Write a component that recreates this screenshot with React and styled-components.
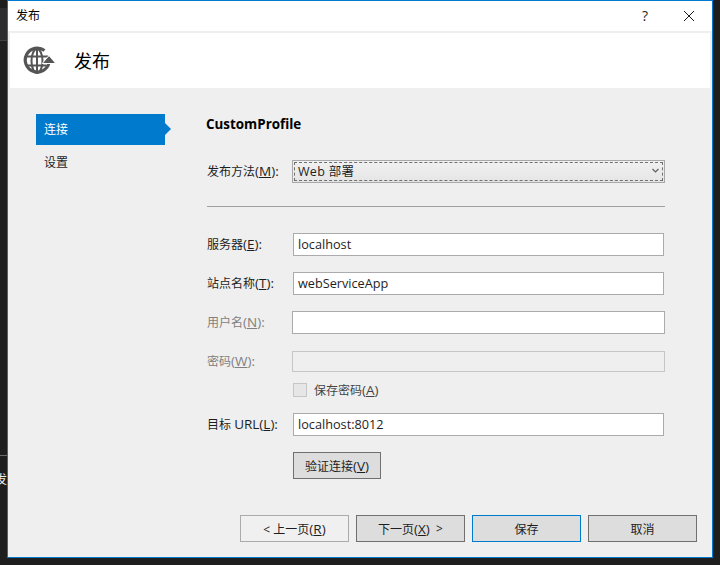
import React from "react";
import styled, { createGlobalStyle } from "styled-components";

const Global = createGlobalStyle`
  html, body { margin: 0; padding: 0; background: #1e1e1e; }
  body { width: 720px; height: 565px; overflow: hidden; position: relative; }
`;

const FONT = `"Open Sans", "Noto Sans CJK SC", sans-serif`;

const Desktop = styled.div`
  position: relative;
  width: 720px;
  height: 565px;
  overflow: hidden;
  background: #1e1e1e;
  font-family: ${FONT};
  font-size: 12px;
  color: #1e1e1e;
`;
const BackStrip = styled.div`
  position: absolute;
  left: 0;
  top: 8px;
  width: 7px;
  height: 32px;
  background: #2d2d30;
  border-bottom: 1px solid #3f3f46;
`;
const BackLine = styled.div`
  position: absolute;
  left: 0;
  top: 455px;
  width: 7px;
  height: 1px;
  background: #6a6a6a;
`;
const BackText = styled.div`
  position: absolute;
  left: -5px;
  top: 471px;
  color: #f1f1f1;
  font-size: 12px;
  line-height: 18px;
`;
const Window = styled.div`
  position: absolute;
  left: 7px;
  top: 0;
  width: 706px;
  height: 558px;
  box-sizing: border-box;
  border: 1px solid #007acc;
  background: #efefef;
  display: flex;
  flex-direction: column;
`;
const TitleBar = styled.div`
  height: 30px;
  flex: none;
  background: #fff;
  display: flex;
  align-items: center;
  padding: 0 10px 0 8px;
  line-height: 30px;
`;
const TitleText = styled.div`
  flex: 1;
  color: #000;
`;
const Help = styled.div`
  width: 14px;
  margin-right: 31px;
  font-size: 14px;
  color: #1e1e1e;
  text-align: center;
`;
const CloseIcon = styled.svg`
  display: block;
  width: 12px;
  height: 12px;
  margin-right: 7px;
`;
const Header = styled.div`
  margin: 2px 2px 0;
  height: 55px;
  flex: none;
  background: #fff;
  display: flex;
  align-items: center;
  padding-left: 13px;
`;
const HeaderIcon = styled.svg`
  display: block;
  width: 34px;
  height: 32px;
  flex: none;
`;
const HeaderTitle = styled.div`
  margin-left: 17px;
  padding-bottom: 2px;
  font-size: 18px;
  color: #000;
`;
const Body = styled.div`
  flex: 1;
  display: flex;
  min-height: 0;
`;
const Sidebar = styled.div`
  width: 170px;
  flex: none;
  box-sizing: border-box;
  padding: 26px 0 0 28px;
`;
const NavItem = styled.div`
  position: relative;
  width: 129px;
  height: 31px;
  box-sizing: border-box;
  padding-left: 8px;
  line-height: 31px;
  margin-bottom: 2px;
  background: ${p => (p.$active ? "#007acc" : "transparent")};
  color: ${p => (p.$active ? "#fff" : "#1e1e1e")};
  ${p =>
    p.$active &&
    `&::after {
      content: "";
      position: absolute;
      left: 100%;
      top: 9px;
      border-left: 6px solid #007acc;
      border-top: 6px solid transparent;
      border-bottom: 6px solid transparent;
    }`}
`;
const Content = styled.div`
  flex: 1;
  padding: 26px 0 0 29px;
  display: flex;
  flex-direction: column;
`;
const Heading = styled.div`
  height: 20px;
  margin-left: -1px;
  line-height: 20px;
  font-size: 13.4px;
  font-weight: 700;
  color: #000;
`;
const Row = styled.div`
  display: flex;
  align-items: center;
  margin-top: ${p => p.$top}px;
  height: ${p => p.$h || 23}px;
`;
const Label = styled.div`
  width: 86px;
  flex: none;
  padding-bottom: 2px;
  white-space: nowrap;
  color: ${p => (p.$off ? "#808080" : "#1e1e1e")};
`;
const Key = styled.span`
  font-size: 13.5px;
`;
const Input = styled.div`
  box-sizing: border-box;
  width: ${p => (p.$wide ? 373 : 371)}px;
  height: ${p => p.$h || 23}px;
  margin-left: ${p => (p.$wide ? -1 : 0)}px;
  padding-left: 4px;
  line-height: 20px;
  font-size: 12.7px;
  background: ${p => (p.$disabled ? "#efefef" : "#fff")};
  border: 1px solid ${p => (p.$disabled ? "#c6c6c6" : "#ababab")};
  color: #1e1e1e;
`;
const Select = styled.div`
  box-sizing: border-box;
  width: 373px;
  height: 23px;
  margin-left: -1px;
  padding: 1px;
  border: 1px solid #a8a8a8;
  background: linear-gradient(#f1f1f1, #e5e5e5);
`;
const SelectInner = styled.div`
  box-sizing: border-box;
  height: 19px;
  border: 1px dashed #707070;
  display: flex;
  align-items: center;
  justify-content: space-between;
  padding: 0 3px 2px 3px;
  font-size: 12.5px;
  letter-spacing: 0.3px;
  color: #1e1e1e;
`;
const Chevron = styled.svg`
  display: block;
  width: 7px;
  height: 5px;
`;
const Divider = styled.div`
  margin-top: 23px;
  width: 458px;
  height: 1px;
  background: #a0a0a0;
`;
const CheckRow = styled.div`
  display: flex;
  align-items: center;
  margin: 11px 0 0 86px;
  height: 13px;
`;
const CheckBox = styled.div`
  box-sizing: border-box;
  width: 14px;
  height: 14px;
  border: 1px solid #c6c6c6;
  background: #e6e6e6;
`;
const CheckLabel = styled.div`
  margin-left: 7px;
  color: #444;
`;
const Button = styled.div`
  box-sizing: border-box;
  width: ${p => p.$w || 109}px;
  height: 27px;
  display: flex;
  align-items: center;
  justify-content: center;
  white-space: pre;
  background: ${p => (p.$light ? "#f0f0f0" : "#dddddd")};
  border: 1px solid ${p => (p.$primary ? "#007acc" : p.$light ? "#ababab" : "#707070")};
  color: #1e1e1e;
`;
const VerifyWrap = styled.div`
  margin: 16px 0 0 86px;
`;
const Footer = styled.div`
  flex: none;
  display: flex;
  justify-content: flex-end;
  gap: 7px;
  padding: 0 15px 15px 0;
`;

const Globe = () => (
  <HeaderIcon viewBox="0 0 34 32">
    <g fill="none" stroke="#555">
      <path d="M21.5 5.5A12 12 0 1 0 26 17.5" strokeWidth="3.2" />
      <ellipse cx="14" cy="16" rx="5.5" ry="12" strokeWidth="2" />
      <path d="M14 4v24M3 11.5h22M3 20.5h20" strokeWidth="2" />
    </g>
    <path d="M26 10.5l-6.8 8h13.6z" fill="#555" stroke="#fff" strokeWidth="1" strokeLinejoin="round" />
  </HeaderIcon>
);

export default function App() {
  return (
    <Desktop>
      <Global />
      <BackStrip />
      <BackLine />
      <BackText>发</BackText>
      <Window>
        <TitleBar>
          <TitleText>发布</TitleText>
          <Help>?</Help>
          <CloseIcon viewBox="0 0 12 12">
            <path d="M1 1l10 10M11 1L1 11" stroke="#1a1a1a" strokeWidth="1" fill="none" />
          </CloseIcon>
        </TitleBar>
        <Header>
          <Globe />
          <HeaderTitle>发布</HeaderTitle>
        </Header>
        <Body>
          <Sidebar>
            <NavItem $active>连接</NavItem>
            <NavItem>设置</NavItem>
          </Sidebar>
          <Content>
            <Heading>CustomProfile</Heading>
            <Row $top={26}>
              <Label>发布方法<Key>(<u>M</u>):</Key></Label>
              <Select>
                <SelectInner>
                  <span>Web 部署</span>
                  <Chevron viewBox="0 0 7 5">
                    <path d="M.5 1l3 3 3-3" stroke="#606060" strokeWidth="1.2" fill="none" />
                  </Chevron>
                </SelectInner>
              </Select>
            </Row>
            <Divider />
            <Row $top={26}>
              <Label>服务器<Key>(<u>E</u>):</Key></Label>
              <Input>localhost</Input>
            </Row>
            <Row $top={16}>
              <Label>站点名称<Key>(<u>T</u>):</Key></Label>
              <Input>webServiceApp</Input>
            </Row>
            <Row $top={16}>
              <Label $off>用户名<Key>(<u>N</u>):</Key></Label>
              <Input $wide />
            </Row>
            <Row $top={17} $h={21}>
              <Label $off>密码<Key>(<u>W</u>):</Key></Label>
              <Input $wide $disabled $h={21} />
            </Row>
            <CheckRow>
              <CheckBox />
              <CheckLabel>保存密码<Key>(<u>A</u>)</Key></CheckLabel>
            </CheckRow>
            <Row $top={17}>
              <Label>目标 <Key>URL(<u>L</u>):</Key></Label>
              <Input>localhost:8012</Input>
            </Row>
            <VerifyWrap>
              <Button $w={88}>验证连接<Key>(<u>V</u>)</Key></Button>
            </VerifyWrap>
          </Content>
        </Body>
        <Footer>
          <Button $light>{"< 上一页"}<Key>(<u>R</u>)</Key></Button>
          <Button>下一页<Key>(<u>X</u>)</Key>{"  >"}</Button>
          <Button $primary>保存</Button>
          <Button>取消</Button>
        </Footer>
      </Window>
    </Desktop>
  );
}
